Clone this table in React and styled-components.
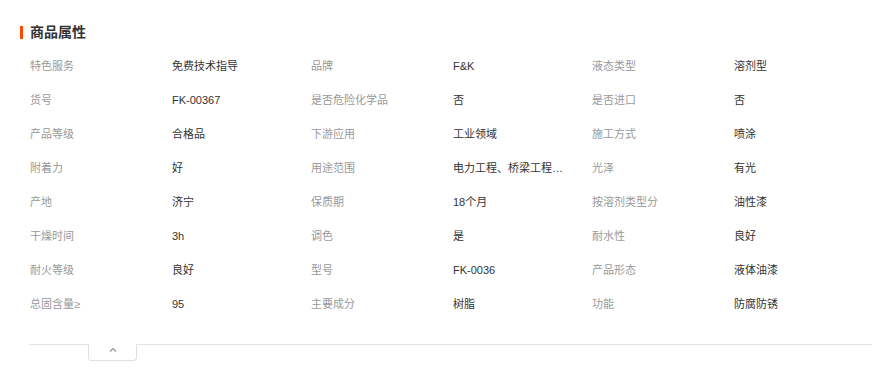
import React from "react";
import styled, { createGlobalStyle } from "styled-components";

const GlobalStyle = createGlobalStyle`
  body {
    margin: 0;
    background: #fff;
    font-family: "Liberation Sans", "Noto Sans CJK SC", sans-serif;
  }
`;

const Section = styled.div`
  padding: 25px 0 0 20px;
  width: 852px;
`;

const Title = styled.h3`
  margin: 0;
  display: flex;
  align-items: center;
  gap: 7px;
  font-size: 14px;
  font-weight: 700;
  color: #333;
  height: 14px;
  line-height: 14px;
`;

const Bar = styled.span`
  width: 3px;
  height: 13px;
  background: #ff4a00;
`;

const Grid = styled.div`
  display: grid;
  grid-template-columns: repeat(3, 142px 139px);
  margin: 10px 0 0 10px;
`;

const Cell = styled.div`
  height: 34px;
  line-height: 34px;
  font-size: 11px;
  color: ${({ $label }) => ($label ? "#999" : "#333")};
  white-space: nowrap;
  overflow: hidden;
  text-overflow: ellipsis;
  padding-right: 20px;
`;

const Footer = styled.div`
  margin: 23px 0 0 9px;
  border-top: 1px solid #e4e4e4;
  height: 30px;
`;

const Toggle = styled.div`
  margin-left: 59px;
  margin-top: -1px;
  width: 49px;
  height: 17px;
  border: 1px solid #e0e0e0;
  border-top: 1px solid #fff;
  border-radius: 0 0 4px 4px;
  display: flex;
  justify-content: center;
  padding-top: 1px;
  box-sizing: border-box;
`;

const rows = [
  ["特色服务", "免费技术指导", "品牌", "F&K", "液态类型", "溶剂型"],
  ["货号", "FK-00367", "是否危险化学品", "否", "是否进口", "否"],
  ["产品等级", "合格品", "下游应用", "工业领域", "施工方式", "喷涂"],
  ["附着力", "好", "用途范围", "电力工程、桥梁工程、钢结构", "光泽", "有光"],
  ["产地", "济宁", "保质期", "18个月", "按溶剂类型分", "油性漆"],
  ["干燥时间", "3h", "调色", "是", "耐水性", "良好"],
  ["耐火等级", "良好", "型号", "FK-0036", "产品形态", "液体油漆"],
  ["总固含量≥", "95", "主要成分", "树脂", "功能", "防腐防锈"],
];

export default function App() {
  return (
    <>
      <GlobalStyle />
      <Section>
        <Title>
          <Bar />
          商品属性
        </Title>
        <Grid>
          {rows.map((row, i) =>
            row.map((text, j) => (
              <Cell key={`${i}-${j}`} $label={j % 2 === 0}>
                {text}
              </Cell>
            ))
          )}
        </Grid>
        <Footer>
          <Toggle>
            <svg width="10" height="8" viewBox="0 0 10 8">
              <path d="M2 5.5 L5 2.5 L8 5.5" fill="none" stroke="#8a93a6" strokeWidth="1.2" />
            </svg>
          </Toggle>
        </Footer>
      </Section>
    </>
  );
}
